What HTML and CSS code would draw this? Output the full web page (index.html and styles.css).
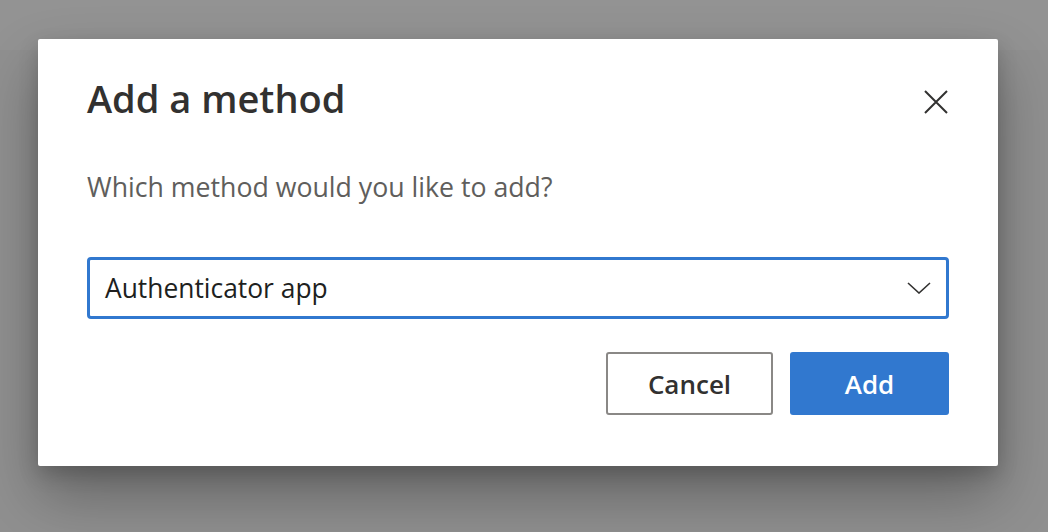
FILE: index.html
```html
<!DOCTYPE html>
<html lang="en">
<head>
<meta charset="utf-8">
<title>Add a method</title>
<link rel="stylesheet" href="styles.css">
</head>
<body>
<div class="overlay">
  <div class="dialog" role="dialog" aria-labelledby="dlg-title">
    <div class="dialog-header">
      <h1 class="dialog-title" id="dlg-title">Add a method</h1>
      <button class="close-btn" aria-label="Close">
        <svg width="24" height="24" viewBox="0 0 24 24"><path d="M1 1 L23 23 M23 1 L1 23" stroke="#323130" stroke-width="2" fill="none"/></svg>
      </button>
    </div>
    <p class="dialog-subtitle">Which method would you like to add?</p>
    <div class="select-box">
      <span class="select-value">Authenticator app</span>
      <svg class="chevron" width="24" height="12" viewBox="0 0 24 12"><path d="M1 1 L12 11 L23 1" stroke="#323130" stroke-width="1.6" fill="none"/></svg>
    </div>
    <div class="dialog-actions">
      <button class="btn btn-secondary">Cancel</button>
      <button class="btn btn-primary">Add</button>
    </div>
  </div>
</div>
</body>
</html>
```
FILE: styles.css
```css
html, body {
  margin: 0;
  padding: 0;
  height: 100%;
}
body {
  background: linear-gradient(to bottom, #939393 0, #939393 50px, #909090 50px, #909090 100%);
  font-family: "Open Sans", "Noto Sans", "Liberation Sans", sans-serif;
  overflow: hidden;
}
.overlay {
  padding: 39px 50px 0 38px;
}
.dialog {
  width: 960px;
  box-sizing: border-box;
  background: #ffffff;
  border-radius: 2px;
  padding: 35px 49px 51px 49px;
  box-shadow: 0 30px 60px rgba(0, 0, 0, 0.3), 0 8px 20px rgba(0, 0, 0, 0.18);
}
.dialog-header {
  display: flex;
  justify-content: space-between;
  align-items: flex-start;
}
.dialog-title {
  margin: 0;
  font-size: 38px;
  line-height: 48px;
  font-weight: 600;
  color: #323130;
}
.close-btn {
  margin: 16px 1px 0 0;
  padding: 0;
  border: none;
  background: none;
  width: 24px;
  height: 24px;
  display: flex;
}
.dialog-subtitle {
  margin: 47px 0 0 0;
  font-size: 26.7px;
  line-height: 36px;
  color: #605e5c;
}
.select-box {
  margin-top: 52px;
  height: 62px;
  box-sizing: border-box;
  border: 3px solid #3178cf;
  border-radius: 4px;
  display: flex;
  align-items: center;
  justify-content: space-between;
  padding: 0 15px 0 15px;
}
.select-value {
  font-size: 26.4px;
  line-height: 36px;
  color: #201f1e;
}
.chevron {
  display: block;
}
.dialog-actions {
  margin-top: 33px;
  display: flex;
  justify-content: flex-end;
  gap: 17px;
}
.btn {
  height: 63px;
  box-sizing: border-box;
  border-radius: 3px;
  font-family: "Open Sans", "Noto Sans", "Liberation Sans", sans-serif;
  font-size: 26px;
  font-weight: 600;
  padding: 0;
}
.btn-secondary {
  width: 167px;
  background: #ffffff;
  border: 2px solid #8a8886;
  color: #323130;
}
.btn-primary {
  width: 159px;
  background: #3178cf;
  border: none;
  color: #ffffff;
}
```
